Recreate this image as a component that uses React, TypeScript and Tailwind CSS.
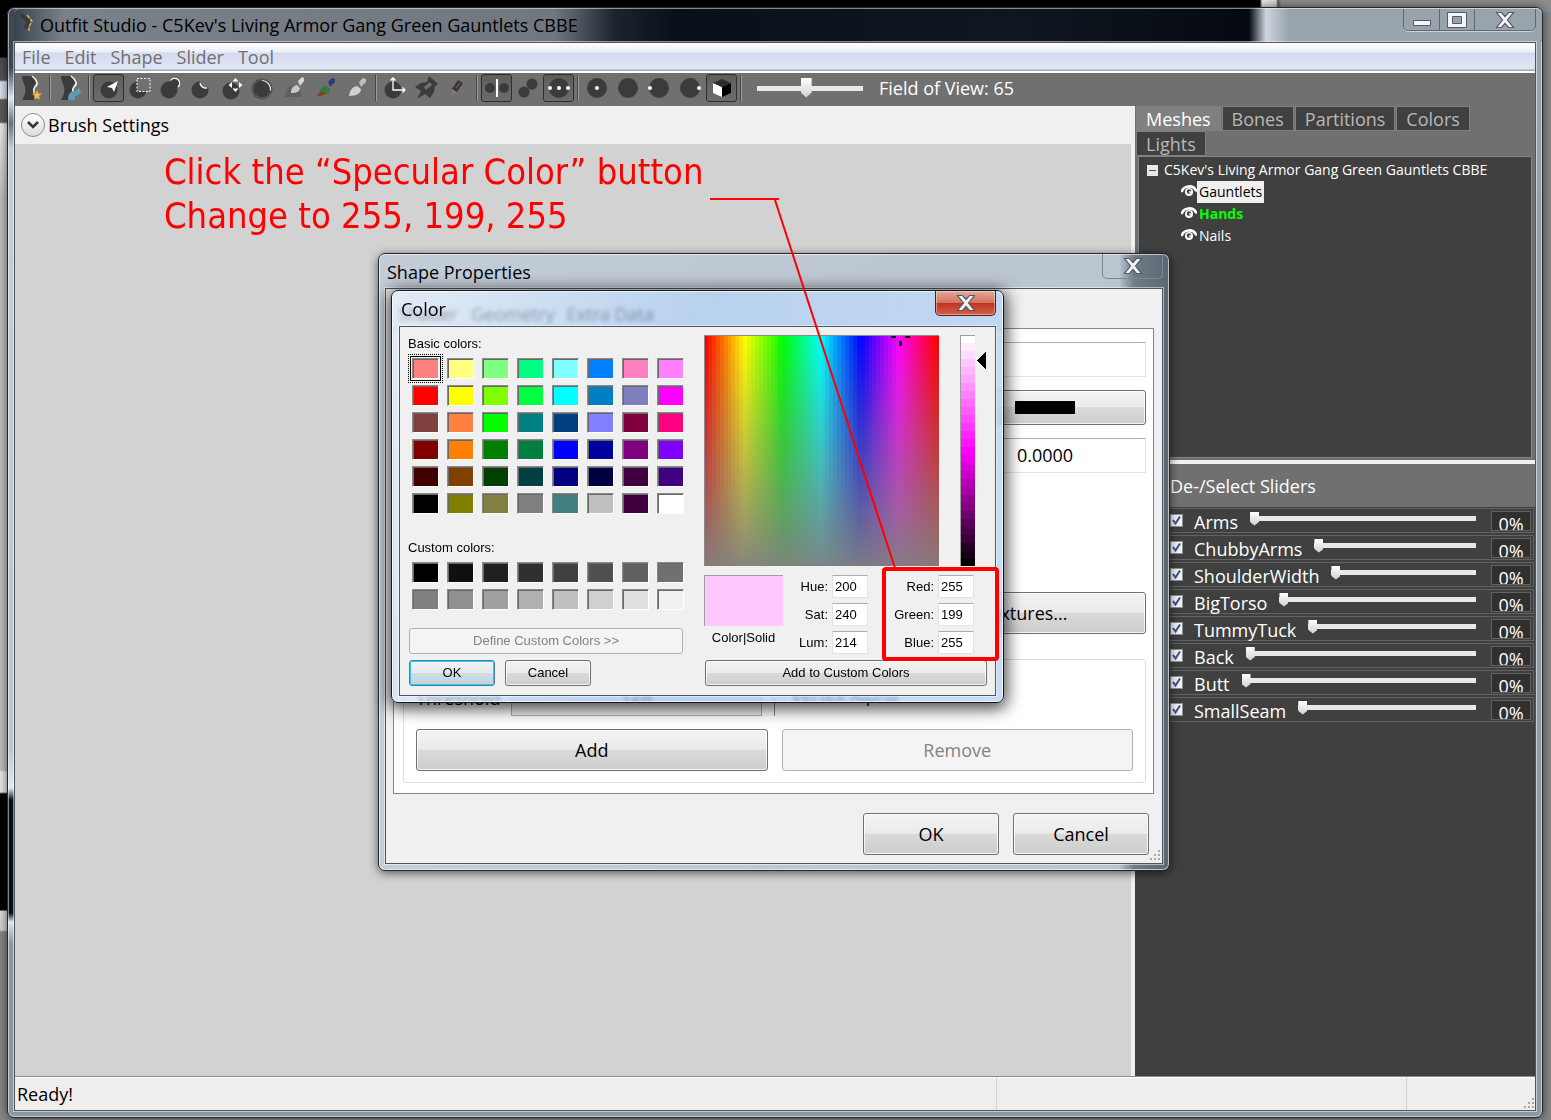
import React from 'react';
import { clsx } from 'clsx';

const BASIC_COLORS = [
  '#ff8080', '#ffff80', '#80ff80', '#00ff80', '#80ffff', '#0080ff', '#ff80c0', '#ff80ff',
  '#ff0000', '#ffff00', '#80ff00', '#00ff40', '#00ffff', '#0080c0', '#8080c0', '#ff00ff',
  '#804040', '#ff8040', '#00ff00', '#008080', '#004080', '#8080ff', '#800040', '#ff0080',
  '#800000', '#ff8000', '#008000', '#008040', '#0000ff', '#0000a0', '#800080', '#8000ff',
  '#400000', '#804000', '#004000', '#004040', '#000080', '#000040', '#400040', '#400080',
  '#000000', '#808000', '#808040', '#808080', '#408080', '#c0c0c0', '#400040', '#ffffff',
];

const CUSTOM_COLORS = [
  '#000000', '#101010', '#202020', '#303030', '#404040', '#505050', '#606060', '#707070',
  '#808080', '#909090', '#a0a0a0', '#b0b0b0', '#c0c0c0', '#d0d0d0', '#e0e0e0', '#f0f0f0',
];

const SLIDERS = ['Arms', 'ChubbyArms', 'ShoulderWidth', 'BigTorso', 'TummyTuck', 'Back', 'Butt', 'SmallSeam'];

const TABS = ['Meshes', 'Bones', 'Partitions', 'Colors', 'Lights'];

const glassButton =
  'rounded-[3px] border border-[#707070] bg-[linear-gradient(#f3f3f3,#ebebeb_48%,#dadada_50%,#cdcdcd)] shadow-[inset_0_0_0_1px_rgba(255,255,255,0.8)]';
const disabledButton = 'rounded-[3px] border border-[#adb2b5] bg-[#f4f4f4] text-[#838383]';
const textBox = 'border border-[#e2e3ea] border-t-[#abadb3] bg-white';

/* ---------- toolbar icons ---------- */

const Icon = ({ children }: { children: React.ReactNode }) => (
  <svg width="28" height="28" viewBox="0 0 28 28" fill="none">
    {children}
  </svg>
);

const Body = () => (
  <>
    <path d="M5 2h11c3 4 4 7 1 10c-2 3-1 9 1 14H5c3-5 4-9 3-13C7 9 5 6 5 2z" fill="#3b3b3b" />
    <path d="M15 2c5 4 7 8 3 11c-2 2-1 4-1 6" stroke="#fff" strokeWidth="1.4" />
  </>
);

const Brush = ({ tip, tail }: { tip: string; tail: string }) => (
  <>
    <path d="M16 8l4-4 3 1 0 3-5 5z" fill={tail} />
    <path d="M6 22c1-6 3-9 8-10l4 3c0 4-4 7-12 7z" fill={tip} />
    <path d="M14 10l4 4" stroke="#707070" />
  </>
);

type Tool = { name: string; icon: React.ReactNode; active?: boolean };

const TOOL_GROUPS: Tool[][] = [
  [
    {
      name: 'New Project',
      icon: (
        <>
          <Body />
          <path d="M20 16l1.300 3.500 3.700.3-3 2.300 1 3.600-3-2-3 2 1-3.600-3-2.300 3.700-.3z" fill="#f4b941" />
        </>
      ),
    },
  ],
  [
    {
      name: 'Load Reference',
      icon: (
        <>
          <Body />
          <path d="M12 26c0-7 3-9 7-9l4-3 2 4c-2 3-3 3-6 4v4z" fill="#5b9bb8" />
        </>
      ),
    },
  ],
  [
    {
      name: 'Select',
      active: true,
      icon: (
        <>
          <circle cx="14" cy="16" r="8.500" fill="#3b3b3b" />
          <path d="M23 7l-4 11-2-4-5-1z" fill="#fff" />
        </>
      ),
    },
    {
      name: 'Mask',
      icon: (
        <>
          <circle cx="12" cy="16" r="8.500" fill="#3b3b3b" />
          <path d="M11 4.500h13v13H11z" fill="#707070" stroke="#fff" strokeDasharray="2 1.500" />
        </>
      ),
    },
    {
      name: 'Inflate',
      icon: (
        <>
          <circle cx="12" cy="16" r="8.500" fill="#3b3b3b" />
          <circle cx="18" cy="9" r="5" fill="#3b3b3b" />
          <path d="M13.500 6.500a5 5 0 1 1 7.500 6.500" stroke="#fff" strokeWidth="1.200" />
        </>
      ),
    },
    {
      name: 'Deflate',
      icon: (
        <>
          <circle cx="12" cy="16" r="8.500" fill="#3b3b3b" />
          <circle cx="18" cy="8" r="6" fill="#707070" />
          <path d="M12 9a6 6 0 0 0 7 5" stroke="#fff" strokeWidth="1.400" />
        </>
      ),
    },
    {
      name: 'Move',
      icon: (
        <>
          <circle cx="12" cy="17" r="8.500" fill="#3b3b3b" />
          <path d="M16.500 4l3 3.500h-6zM16.500 18l3-3.500h-6zM9.500 11l3.500-3v6zM23.500 11l-3.500-3v6z" fill="#fff" />
        </>
      ),
    },
    {
      name: 'Smooth',
      icon: (
        <>
          <circle cx="12" cy="15" r="8.500" fill="#3b3b3b" />
          <circle cx="12" cy="15" r="9.500" stroke="#3b3b3b" strokeWidth="2" strokeDasharray="1.200 1.200" />
          <path d="M12 6.500a9 9 0 0 1 8.500 10" stroke="#e8e8e8" strokeWidth="1.200" />
        </>
      ),
    },
    {
      name: 'Weight Brush',
      icon: (
        <>
          <path d="M3 23l5-11h11l2 11z" fill="#606060" />
          <path d="M17 7l4-4 2 1v3l-4 5z" fill="#d8d8d8" />
          <path d="M10 19c0-5 2-7 6-8l3 3c0 3-3 5-9 5z" fill="#c8c8c8" />
        </>
      ),
    },
    {
      name: 'Color Brush',
      icon: (
        <>
          <Brush tip="#357a35" tail="#2f3c7a" />
          <path d="M5 22c1-3 4-5 8-4-1 3-4 4-8 4z" fill="#963030" />
        </>
      ),
    },
    { name: 'Alpha Brush', icon: <Brush tip="#d0d0d0" tail="#bdbdbd" /> },
  ],
  [
    {
      name: 'Transform',
      icon: (
        <>
          <circle cx="11" cy="16" r="8.500" fill="#3b3b3b" />
          <path d="M11 4v12h12M8.500 6.500L11 4l2.500 2.500M20.500 13.500L23 16l-2.500 2.500" stroke="#fff" strokeWidth="1.300" />
        </>
      ),
    },
    {
      name: 'Pivot',
      icon: (
        <path
          fillRule="evenodd"
          d="M16 2l9 8-3 2-1 6-4 6-5-4-8 5 4-8-6-4 6-4 6-1zM17 8l-6 5 2 3 6-5z"
          fill="#3b3b3b"
        />
      ),
    },
    {
      name: 'Vertex Edit',
      icon: (
        <>
          <path d="M8 15l6-9 5 3-6 9-6 3z" fill="#3a3432" />
          <path d="M8 15l5 3-6 4z" fill="#8b7b72" />
          <path d="M12 14l4-5" stroke="#665a55" strokeWidth="1.500" />
        </>
      ),
    },
  ],
  [
    {
      name: 'X Mirror',
      active: true,
      icon: (
        <>
          <circle cx="7" cy="14" r="5" fill="#3b3b3b" />
          <circle cx="21" cy="14" r="5" fill="#3b3b3b" />
          <path d="M14 5v18" stroke="#fff" strokeWidth="2" />
        </>
      ),
    },
    {
      name: 'Connected Only',
      icon: (
        <>
          <circle cx="10" cy="18" r="5.500" fill="#3b3b3b" />
          <circle cx="18" cy="10" r="5.500" fill="#3b3b3b" />
        </>
      ),
    },
    {
      name: 'Global Collision',
      active: true,
      icon: (
        <>
          <circle cx="14" cy="14" r="10" fill="#3b3b3b" />
          <circle cx="5" cy="14" r="2" fill="#fff" />
          <circle cx="14" cy="14" r="2" fill="#fff" />
          <circle cx="23" cy="14" r="2" fill="#fff" />
        </>
      ),
    },
  ],
  [
    {
      name: 'Center View',
      icon: (
        <>
          <circle cx="13" cy="14" r="10" fill="#3b3b3b" />
          <circle cx="13" cy="14" r="2" fill="#fff" />
        </>
      ),
    },
    { name: 'Back View', icon: <circle cx="13" cy="14" r="10" fill="#3b3b3b" /> },
    {
      name: 'Left View',
      icon: (
        <>
          <circle cx="13" cy="14" r="10" fill="#3b3b3b" />
          <circle cx="4" cy="14" r="2" fill="#fff" />
        </>
      ),
    },
    {
      name: 'Right View',
      icon: (
        <>
          <circle cx="13" cy="14" r="10" fill="#3b3b3b" />
          <circle cx="22" cy="14" r="2" fill="#fff" />
        </>
      ),
    },
    {
      name: 'Perspective',
      active: true,
      icon: (
        <>
          <path d="M5 9l9 4v10l-9-4z" fill="#fff" />
          <path d="M14 13l9-4v10l-9 4z" fill="#000" />
          <path d="M5 9l9-4 9 4-9 4z" fill="#2c2c2c" />
        </>
      ),
    },
  ],
];

const Toolbar = () => (
  <div className="flex h-[33px] shrink-0 items-start bg-[#707070] pt-px">
    {TOOL_GROUPS.map((group, i) => (
      <React.Fragment key={i}>
        {group.map((tool) => (
          <button
            key={tool.name}
            aria-label={tool.name}
            className={clsx(
              'flex h-7 w-[31px] items-center justify-center rounded-[3px]',
              tool.active && 'border border-[#2e2e2e] bg-[linear-gradient(#5e5e5e,#6c6c6c)]'
            )}
          >
            <Icon>{tool.icon}</Icon>
          </button>
        ))}
        <div className="flex h-7 w-2 justify-center py-px">
          <div className="w-0.5 border-l border-l-[#484848] bg-[#9a9a9a]" />
        </div>
      </React.Fragment>
    ))}
    <input
      type="range"
      defaultValue={46}
      aria-label="Field of View"
      className="mt-1 ml-3 h-5 w-[106px] appearance-none bg-transparent [&::-webkit-slider-runnable-track]:h-[5px] [&::-webkit-slider-runnable-track]:bg-[#e8e8e8] [&::-webkit-slider-thumb]:-mt-2 [&::-webkit-slider-thumb]:h-5 [&::-webkit-slider-thumb]:w-[11px] [&::-webkit-slider-thumb]:appearance-none [&::-webkit-slider-thumb]:bg-[linear-gradient(#fff,#cfcfcf)] [&::-webkit-slider-thumb]:[clip-path:polygon(0_0,100%_0,100%_75%,50%_100%,0_75%)]"
    />
    <span className="ml-4 text-[18px] leading-7 text-white">Field of View: 65</span>
  </div>
);

/* ---------- windows ---------- */

const Grip = ({ className }: { className?: string }) => (
  <svg width="12" height="12" viewBox="0 0 12 12" className={className} fill="#a9a9a9">
    <path d="M9 0h2v2H9zM9 4h2v2H9zM9 8h2v2H9zM5 4h2v2H5zM5 8h2v2H5zM1 8h2v2H1z" />
  </svg>
);

const CloseGlyph = () => (
  <svg width="20" height="18" viewBox="0 0 20 18">
    <path
      d="M1.500 1.500h5L10 5.500l3.500-4h5L12.500 9l6 7.500h-5L10 12.500l-3.500 4h-5l6-7.500z"
      fill="#f4f4f4"
      stroke="#53586a"
      strokeWidth="1.200"
    />
  </svg>
);

const Client = ({ children, className }: { children: React.ReactNode; className?: string }) => (
  <div className={clsx('flex flex-1 flex-col border border-[#4c5660] shadow-[0_0_0_1px_rgba(255,255,255,0.5)]', className)}>
    {children}
  </div>
);

/* ---------- right pane ---------- */

const Eye = () => (
  <svg width="16" height="14" viewBox="0 0 16 14" className="-mt-0.5">
    <path d="M1 7C3 1.500 12 .5 15 6.500" stroke="#fff" strokeWidth="2.600" strokeLinecap="round" fill="none" />
    <circle cx="8" cy="8" r="4" fill="#fff" />
    <circle cx="8" cy="7.500" r="2.200" fill="#404040" />
    <circle cx="9" cy="8" r="1" fill="#fff" />
  </svg>
);

const MeshTree = () => (
  <ul className="mx-[3px] h-[302px] border border-[#7d8489] bg-[#404040] pt-0.5 text-[14px] leading-[22px] text-white">
    <li>
      <div className="flex items-center gap-1.5 pl-2">
        <svg width="11" height="11" viewBox="0 0 11 11">
          <path d="M0 0h11v11H0z" fill="#e8e8e8" />
          <path d="M2 5.500h7" stroke="#3b57a0" />
        </svg>
        <span>C5Kev's Living Armor Gang Green Gauntlets CBBE</span>
      </div>
      <ul className="pl-[42px]">
        <li className="flex items-center">
          <Eye />
          <span className="bg-[#f0f0f0] px-0.5 text-black">Gauntlets</span>
        </li>
        <li className="flex items-center">
          <Eye />
          <span className="px-0.5 font-bold text-[#00ff00]">Hands</span>
        </li>
        <li className="flex items-center">
          <Eye />
          <span className="px-0.5">Nails</span>
        </li>
      </ul>
    </li>
  </ul>
);

const SliderRow = ({ name }: { name: string }) => (
  <div className="mr-px flex h-[25px] items-start border border-[#626262] pr-0.5 pl-[34px]">
    <span className="mt-[5px] grid">
      <input
        id={name}
        type="checkbox"
        defaultChecked
        className="col-start-1 row-start-1 size-[13px] appearance-none border border-[#8e8f8f] bg-[#f0f2f6]"
      />
      <svg viewBox="0 0 13 13" className="pointer-events-none col-start-1 row-start-1 size-[13px]">
        <path d="M3 6l2.500 3.500L10 2.500" stroke="#3b4f91" strokeWidth="2" fill="none" />
      </svg>
    </span>
    <label htmlFor={name} className="ml-[11px] text-[18px] leading-[26px]">
      {name}
    </label>
    <input
      type="range"
      defaultValue={0}
      aria-label={name}
      className="ml-3 mt-0.5 h-[14px] min-w-0 flex-1 appearance-none bg-transparent [&::-webkit-slider-runnable-track]:h-[5px] [&::-webkit-slider-runnable-track]:bg-[#e8e8e8] [&::-webkit-slider-thumb]:-mt-1 [&::-webkit-slider-thumb]:h-[14px] [&::-webkit-slider-thumb]:w-[9px] [&::-webkit-slider-thumb]:appearance-none [&::-webkit-slider-thumb]:bg-[linear-gradient(#fff,#cfcfcf)] [&::-webkit-slider-thumb]:[clip-path:polygon(0_0,100%_0,100%_75%,50%_100%,0_75%)]"
    />
    <input
      aria-label={`${name} value`}
      defaultValue="0%"
      className="mt-0.5 ml-[15px] h-5 w-10 overflow-hidden border border-[#626262] bg-[#303030] pt-[5px] text-center text-[18px] leading-5"
    />
  </div>
);

const SidePane = () => (
  <div className="flex w-[400px] shrink-0 flex-col bg-[#707070] text-white">
    <div className="flex flex-wrap gap-x-px pl-px">
      {TABS.map((tab) => (
        <button
          key={tab}
          className={clsx(
            'h-[25px] border border-[#808080] px-[9px] text-[18px] leading-[24px]',
            tab === 'Meshes' ? 'bg-[#808080] text-white' : 'bg-[#404040] text-[#b8b8b8]'
          )}
        >
          {tab}
        </button>
      ))}
    </div>
    <MeshTree />
    <div className="mt-0.5 h-1 bg-[#f0f0f0]" />
    <h2 className="h-[43px] pl-[35px] text-[18px] leading-[44px]">De-/Select Sliders</h2>
    <div className="flex flex-1 flex-col gap-0.5 bg-[#404040] pt-px">
      {SLIDERS.map((name) => (
        <SliderRow key={name} name={name} />
      ))}
    </div>
  </div>
);

const MainWindow = () => (
  <div className="flex flex-1 flex-col rounded-[7px] border border-[#23282e] bg-[linear-gradient(#98a3ac,#8c99a2),linear-gradient(#3f4852_60px,#dfe6ee_90px,#69727b_115px,#c4cdd8_140px,#bcc6d1_740px,#e3e9f2_780px,#070e16_792px,#070e16_905px,#dfe6f0_914px,#8c99a2_935px)] bg-[size:8px_100%,100%_100%] bg-[position:right,left] bg-no-repeat px-1.5 pb-1.5 shadow-[inset_0_0_0_1px_rgba(255,255,255,0.5),0_0_8px_rgba(0,0,0,0.6)]">
    <div className="-mr-1.5 flex h-[34px] shrink-0 items-start rounded-t-[6px] border-t border-white/50 bg-[linear-gradient(90deg,#39434e,#7a8189_50px,#70777f_540px,#1d242d_600px,#0a1019_660px,#10161f_1000px,#050a12_1235px,#cdd5dd_1252px,#98a3ac_1275px,#98a3ac)]">
      <svg width="26" height="33" viewBox="0 0 26 33">
        <path d="M7 6c8 6 9 6 4 13" stroke="#3a3a3a" strokeWidth="4" fill="none" />
        <path d="M13 6l5 6-3 6v4" stroke="#e9bd4d" strokeWidth="1.300" strokeDasharray="4 1" fill="none" />
      </svg>
      <h1 className="flex-1 text-[18px] leading-[32px] text-black">
        Outfit Studio - C5Kev's Living Armor Gang Green Gauntlets CBBE
      </h1>
      <div className="mr-1.5 flex h-[22px] rounded-b-[5px] border border-t-0 border-[#5e6974] shadow-[0_1px_0_rgba(255,255,255,0.5)]">
        <button aria-label="Minimize" className="flex w-9 items-end justify-center border-r border-[#5e6974] pb-1">
          <svg width="18" height="6" viewBox="0 0 18 6">
            <path d="M.5.5h17v5H.5z" fill="#f4f4f4" stroke="#53586a" />
          </svg>
        </button>
        <button aria-label="Maximize" className="flex w-[35px] items-center justify-center border-r border-[#5e6974]">
          <svg width="20" height="16" viewBox="0 0 20 16">
            <path fillRule="evenodd" d="M.5.5h19v15H.5zM5.500 4.500h9v7h-9z" fill="#f4f4f4" stroke="#53586a" />
          </svg>
        </button>
        <button aria-label="Close" className="flex w-[60px] items-center justify-center">
          <CloseGlyph />
        </button>
      </div>
    </div>
    <Client>
      <nav className="flex h-[30px] shrink-0 gap-[14px] border-b-2 border-white bg-[linear-gradient(#fff,#eceff8_9px,#d5dbee_10px,#e1e6f6_26px,#a8a8b0_27px)] pl-[7px] text-[18px] leading-[28px] text-[#6f6f74]">
        {['File', 'Edit', 'Shape', 'Slider', 'Tool'].map((item) => (
          <button key={item}>{item}</button>
        ))}
      </nav>
      <Toolbar />
      <div className="flex flex-1">
        <div className="flex flex-1 flex-col bg-[#f0f0f0]">
          <div className="flex h-[38px] items-center gap-[3px] pl-1.5 text-[18px]">
            <button
              aria-label="Toggle Brush Settings"
              className="flex size-6 items-center justify-center rounded-full border border-[#8a8a8a] bg-[linear-gradient(#fff,#dcdcdc)]"
            >
              <svg width="12" height="8" viewBox="0 0 12 8">
                <path d="M1 1l5 5 5-5" stroke="#333" strokeWidth="2.500" fill="none" />
              </svg>
            </button>
            <span>Brush Settings</span>
          </div>
          <div className="mr-1 flex-1 bg-[#d2d2d2]" />
        </div>
        <SidePane />
      </div>
      <footer className="flex h-[34px] shrink-0 border-t border-[#8a8a8a] bg-[#f0eded] text-[18px] leading-[34px] shadow-[inset_0_1px_0_#fff]">
        <span className="flex-1 pl-0.5">Ready!</span>
        <span className="w-[410px] border-l border-[#d4d4d4]" />
        <span className="flex w-[129px] items-end justify-end border-l border-[#d4d4d4]">
          <Grip />
        </span>
      </footer>
    </Client>
  </div>
);

/* ---------- dialogs ---------- */

const ShapeProperties = () => (
  <section className="absolute top-[253px] left-[378px] flex h-[618px] w-[792px] flex-col rounded-[7px] border border-[#23282e] bg-[linear-gradient(90deg,#c3cdd8,#bbc5d0_740px,#6f7b87_755px,#5a6672)] px-1.5 pb-1.5 text-[18px] text-black shadow-[inset_0_0_0_1px_rgba(255,255,255,0.6),0_2px_10px_rgba(0,0,0,0.6)]">
    <header className="flex h-[34px] shrink-0 items-start justify-between">
      <h2 className="pl-0.5 leading-[36px]">Shape Properties</h2>
      <button
        aria-label="Close Shape Properties"
        className="flex h-[25px] w-[61px] items-center justify-center rounded-b-[5px] border border-t-0 border-[#7e8893]"
      >
        <CloseGlyph />
      </button>
    </header>
    <Client className="bg-[#f0f0f0] px-[7px]">
      <div className="flex h-[39px] shrink-0 items-end gap-3 pl-1 leading-[28px]">
        <button className="w-[62px]">Shader</button>
        <button>Geometry</button>
        <button>Extra Data</button>
      </div>
      <div className="mr-px flex h-[466px] flex-col items-end border border-[#828790] bg-white pt-[13px] pr-[7px] pl-[9px]">
        <input aria-label="Shader" className={clsx('h-[35px] w-[202px]', textBox)} />
        <button aria-label="Specular Color" className={clsx('mt-[13px] flex h-[35px] w-[202px] items-center justify-center', glassButton)}>
          <span className="h-[13px] w-[60px] bg-black" />
        </button>
        <input aria-label="Specular Strength" defaultValue="0.0000" className={clsx('mt-[13px] h-[35px] w-[202px] pb-0.5 text-center', textBox)} />
        <button className={clsx('mt-[119px] h-[42px] w-[244px]', glassButton)}>Textures...</button>
        <div className="mt-[25px] flex h-[124px] w-full flex-col justify-end rounded-[3px] border border-[#d5dfe5] px-3 pb-[11px]">
          <div className="mb-[13px] flex h-[35px] items-center">
            <label htmlFor="threshold" className="w-[95px]">Threshold</label>
            <input
              id="threshold"
              defaultValue="128"
              className="h-[35px] w-[251px] border border-[#abadb3] bg-[#f0f0f0] pb-2 text-center"
            />
            <span className="ml-3 h-full border-l border-[#828790] pl-4 leading-[28px]">Vertex Alpha</span>
          </div>
          <div className="flex gap-[14px]">
            <button className={clsx('h-[42px] flex-1', glassButton)}>Add</button>
            <button disabled className={clsx('h-[42px] flex-1', disabledButton)}>Remove</button>
          </div>
        </div>
      </div>
      <div className="flex flex-1 items-start justify-end gap-[14px] pt-[19px] pr-1.5">
        <button className={clsx('h-[42px] w-[136px]', glassButton)}>OK</button>
        <button className={clsx('h-[42px] w-[136px]', glassButton)}>Cancel</button>
      </div>
      <Grip className="absolute right-2 bottom-2" />
    </Client>
  </section>
);

const Swatches = ({ colors, selected }: { colors: string[]; selected?: number }) => (
  <div className="ml-1 grid w-max grid-cols-8 gap-x-2 gap-y-1.5">
    {colors.map((color, i) => (
      <button
        key={i}
        aria-label={color}
        style={{ backgroundColor: color }}
        className={clsx(
          'h-[21px] w-[27px] border border-r-white border-b-white border-t-[#8a8a8a] border-l-[#8a8a8a]',
          i === selected
            ? 'shadow-[inset_1px_1px_0_#696969,0_0_0_1px_#f0f0f0,0_0_0_2px_#000] outline-1 outline-offset-3 outline-dotted outline-black'
            : 'shadow-[inset_1px_1px_0_#696969]'
        )}
      />
    ))}
  </div>
);

const HUE_STEPS = 60;
const LUM_STEPS = 29;

const Spectrum = () => (
  <svg width="235" height="231" viewBox="0 0 235 231" shapeRendering="crispEdges">
    <defs>
      <linearGradient id="fade" x1="0" y1="0" x2="0" y2="1">
        <stop offset="0" stopColor="#808080" stopOpacity="0" />
        <stop offset="1" stopColor="#808080" stopOpacity="0.950" />
      </linearGradient>
    </defs>
    {Array.from({ length: HUE_STEPS }, (_, i) => (
      <rect key={i} x={(i * 235) / HUE_STEPS} width="5" height="231" fill={`hsl(${(i * 360) / (HUE_STEPS - 1)} 100% 50%)`} />
    ))}
    <rect width="235" height="231" fill="url(#fade)" />
    <path d="M0 .5h235M.5 0v231" stroke="#8a8a8a" />
    <path d="M187 1h5v2h-5zM201 1h5v2h-5zM195 6h3v5h-3z" fill="#000" />
  </svg>
);

const LuminanceBar = () => (
  <svg width="28" height="231" viewBox="0 0 28 231" shapeRendering="crispEdges">
    {Array.from({ length: LUM_STEPS }, (_, i) => (
      <rect key={i} y={i * 8} width="15" height="8" fill={`hsl(300 100% ${100 - (i * 100) / (LUM_STEPS - 1)}%)`} />
    ))}
    <path d="M0 .5h15M.5 0v231" stroke="#a0a0a0" />
    <path d="M26 17v17l-9-8.500z" fill="#000" />
  </svg>
);

const Field = ({ label, value }: { label: string; value: string }) => (
  <label className="flex h-[23px] items-center justify-end gap-1">
    {label}:
    <input defaultValue={value} className={clsx('h-[23px] w-9 px-0.5', textBox)} />
  </label>
);

const ColorDialog = () => (
  <section className="absolute top-[290px] left-[391px] flex w-[613px] flex-col rounded-[7px] border border-[#12181f] bg-[linear-gradient(100deg,rgba(220,233,248,0.7),rgba(160,196,236,0.7)_45%,rgba(180,210,243,0.75))] px-[7px] pb-1.5 text-black shadow-[inset_0_0_0_1px_rgba(255,255,255,0.7),0_3px_16px_3px_rgba(0,0,0,0.7)] backdrop-blur-[2px]">
    <header className="flex h-[35px] shrink-0 items-start justify-between">
      <h2 className="pl-0.5 text-[18px] leading-[36px]">Color</h2>
      <button
        aria-label="Close Color"
        className="flex h-[25px] w-[61px] items-center justify-center rounded-b-[5px] border border-t-0 border-[#5a1a17] bg-[linear-gradient(#e5a99b,#d4735f_48%,#bf3320_50%,#d0614a)] shadow-[inset_0_0_0_1px_rgba(255,255,255,0.4)]"
      >
        <CloseGlyph />
      </button>
    </header>
    <Client className="bg-[#f0f0f0] font-['Liberation_Sans',sans-serif] text-[13px] leading-4">
      <div className="flex pt-[9px] pb-[9px] pl-2">
        <div className="w-[296px]">
          <p>Basic colors:</p>
          <div className="mt-1.5">
            <Swatches colors={BASIC_COLORS} selected={0} />
          </div>
          <p className="mt-[26px]">Custom colors:</p>
          <div className="mt-1.5">
            <Swatches colors={CUSTOM_COLORS} />
          </div>
          <button disabled className={clsx('mt-[18px] ml-px block h-[26px] w-[274px]', disabledButton)}>
            Define Custom Colors &gt;&gt;
          </button>
          <div className="mt-1.5 ml-px flex gap-[10px]">
            <button className="h-[26px] w-[86px] rounded-[3px] border border-[#3c7fb1] bg-[linear-gradient(#eff4f6,#e3ebef_48%,#cfdde4_50%,#c3d3da)] shadow-[inset_0_0_0_1px_#36c5f5]">
              OK
            </button>
            <button className={clsx('h-[26px] w-[86px]', glassButton)}>Cancel</button>
          </div>
        </div>
        <div className="-mt-px">
          <div className="flex gap-[21px]">
            <Spectrum />
            <LuminanceBar />
          </div>
          <div className="mt-[9px] flex h-20">
            <div className="w-[79px] text-center">
              <div className="mb-1 h-[51px] border-t border-l border-[#a0a0a0] bg-[#ffc7ff]" />
              Color|Solid
            </div>
            <div className="flex w-[85px] flex-col gap-[5px]">
              <Field label="Hue" value="200" />
              <Field label="Sat" value="240" />
              <Field label="Lum" value="214" />
            </div>
            <div className="flex w-[106px] flex-col gap-[5px]">
              <Field label="Red" value="255" />
              <Field label="Green" value="199" />
              <Field label="Blue" value="255" />
            </div>
          </div>
          <button className={clsx('mt-[5px] ml-px block h-[26px] w-[282px]', glassButton)}>Add to Custom Colors</button>
        </div>
      </div>
    </Client>
  </section>
);

const Annotation = () => (
  <div className="pointer-events-none absolute inset-0">
    <p className="absolute top-[150px] left-[164px] font-['DejaVu_Sans_Condensed','Noto_Sans',sans-serif] text-[36px] leading-[44px] whitespace-nowrap text-[#ff0000]">
      Click the “Specular Color” button
      <br />
      Change to 255, 199, 255
    </p>
    <svg width="1000" height="670" viewBox="0 0 1000 670" className="absolute top-0 left-0" fill="none" stroke="#ff0000">
      <path d="M710 199h69M775 200l120 368" strokeWidth="2" />
      <rect x="884" y="569" width="113" height="90" rx="2" strokeWidth="4" />
    </svg>
  </div>
);

export default function App() {
  return (
    <main className="relative flex min-h-screen flex-col overflow-hidden bg-[#858585] bg-[linear-gradient(90deg,#000_1260px,#e8e8e8_1262px,#d0d0d0_1276px,#555_1278px,#8d8d8d_1281px)] bg-[length:100%_12px] bg-no-repeat font-['Open_Sans','Noto_Sans',sans-serif]">
      <div className="flex flex-1 bg-[linear-gradient(#000_57px,#444d56_58px,#555_80px,#d8deee_82px,#d8deee_98px,#5c5c5c_100px,#5c5c5c_122px,#e8e8e8_124px,#bcbcbc_200px,#bcbcbc_770px,#e6e6e6_772px,#e6e6e6_792px,#000_794px,#000_910px,#d8d8d8_911px,#d0d0d0_930px,#858585_932px)] bg-[length:7px_100%] bg-no-repeat pt-[7px] pr-2 pb-0.5 pl-[7px]">
        <MainWindow />
      </div>
      <ShapeProperties />
      <ColorDialog />
      <Annotation />
    </main>
  );
}
